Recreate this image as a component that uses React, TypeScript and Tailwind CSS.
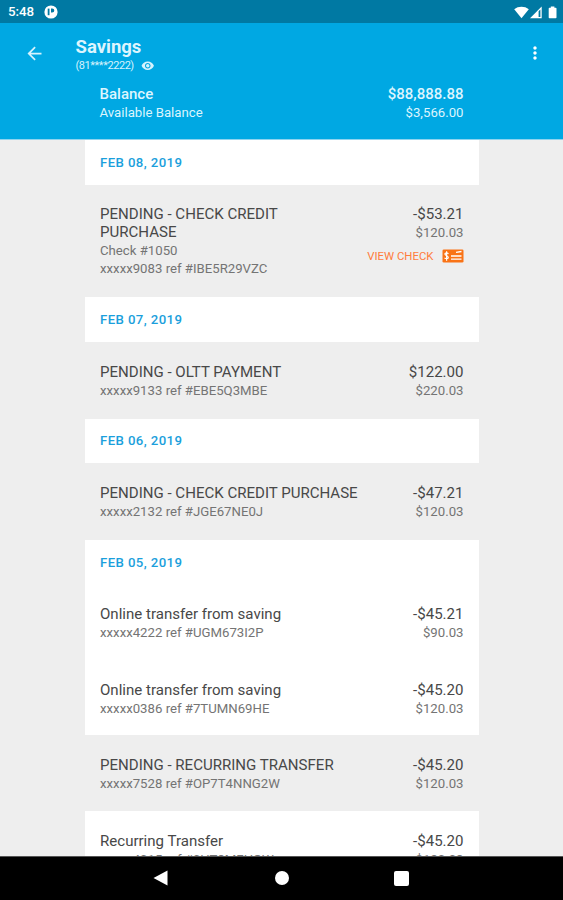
import { useState } from "react";
import { MdArrowBack, MdMoreVert, MdVisibility } from "react-icons/md";

interface Transaction {
  title: string;
  check?: string;
  reference: string;
  amount: string;
  balance: string;
  pending?: boolean;
}

interface DayGroup {
  date: string;
  transactions: Transaction[];
}

const days: DayGroup[] = [
  {
    date: "FEB 08, 2019",
    transactions: [
      {
        title: "PENDING - CHECK CREDIT PURCHASE",
        check: "Check #1050",
        reference: "xxxxx9083 ref #IBE5R29VZC",
        amount: "-$53.21",
        balance: "$120.03",
        pending: true,
      },
    ],
  },
  {
    date: "FEB 07, 2019",
    transactions: [
      {
        title: "PENDING - OLTT PAYMENT",
        reference: "xxxxx9133 ref #EBE5Q3MBE",
        amount: "$122.00",
        balance: "$220.03",
        pending: true,
      },
    ],
  },
  {
    date: "FEB 06, 2019",
    transactions: [
      {
        title: "PENDING - CHECK CREDIT PURCHASE",
        reference: "xxxxx2132 ref #JGE67NE0J",
        amount: "-$47.21",
        balance: "$120.03",
        pending: true,
      },
    ],
  },
  {
    date: "FEB 05, 2019",
    transactions: [
      {
        title: "Online transfer from saving",
        reference: "xxxxx4222 ref #UGM673I2P",
        amount: "-$45.21",
        balance: "$90.03",
      },
      {
        title: "Online transfer from saving",
        reference: "xxxxx0386 ref #7TUMN69HE",
        amount: "-$45.20",
        balance: "$120.03",
      },
      {
        title: "PENDING - RECURRING TRANSFER",
        reference: "xxxxx7528 ref #OP7T4NNG2W",
        amount: "-$45.20",
        balance: "$120.03",
        pending: true,
      },
      {
        title: "Recurring Transfer",
        reference: "xxxxx4015 ref #0HT3MFHGW",
        amount: "-$45.20",
        balance: "$120.03",
      },
    ],
  },
];

const StatusBar = () => (
  <div className="flex h-[23px] shrink-0 items-center bg-[#0079a3] pt-px pr-[6px] pl-[8px] text-white">
    <span className="text-[13.3px] font-medium">5:48</span>
    <svg className="ml-[10px] size-[14px]" viewBox="0 0 14 14">
      <circle cx="7" cy="7" r="6.6" fill="#fff" />
      <path d="M4.6 3.6v6.6" fill="none" stroke="#0079a3" strokeWidth="1.8" />
      <path d="M7 3.4h1.2a2 2 0 0 1 0 4.2H7z" fill="#0079a3" />
    </svg>
    <svg className="ml-auto h-[13px] w-[43px]" viewBox="0 0 43 13" fill="#fff">
      <path d="M.2 3.2C4.3-.1 10.7-.1 14.8 3.2L7.5 12.2z" />
      <path d="M27.7.6V12.3H16z" />
      <path d="M24.6 5.2l1.800-1.800v7.600h-1.800z" fill="#0079a3" />
      <path d="M35.500 1.700h1.300V.6h3.600v1.100h1.300q.8 0 .8.800v9q0 .8-.8.800h-6.200q-.8 0-.8-.8v-9q0-.8.8-.8z" />
    </svg>
  </div>
);

interface HeaderProps {
  masked: boolean;
  onToggle: () => void;
}

const Header = ({ masked, onToggle }: HeaderProps) => (
  <header className="h-[117px] shrink-0 border-b border-[#8fd4ef] bg-[#00a8e3] text-white">
    <div className="flex h-[61.5px] items-start">
      <button className="mt-[19.5px] ml-[24px]" aria-label="Back">
        <MdArrowBack className="size-[21px] text-[#d5f2fd]" />
      </button>
      <div className="mt-[13px] ml-[30.5px]">
        <h1 className="text-[18.5px] leading-[22px] font-bold text-[#dcf5fe]">Savings</h1>
        <div className="flex h-[16px] items-center text-[11px] text-[#d5f2fd]">
          <span className="w-[58px] tracking-[-0.45px]">{masked ? "(81****2222)" : "(8100002222)"}</span>
          <button className="ml-[7px]" onClick={onToggle} aria-label="Show account number">
            <MdVisibility className="size-[13.5px]" />
          </button>
        </div>
      </div>
      <button className="mt-[20px] mr-[18px] ml-auto" aria-label="More options">
        <MdMoreVert className="size-[20px]" />
      </button>
    </div>
    <div className="mx-[99.5px] flex justify-between text-[#dcf5fe]">
      <div>
        <p className="text-[15px] leading-[19px] font-medium">Balance</p>
        <p className="text-[13.2px] leading-[18px]">Available Balance</p>
      </div>
      <div className="text-right">
        <p className="text-[15px] leading-[19px] font-medium">$88,888.88</p>
        <p className="text-[13.2px] leading-[18px]">$3,566.00</p>
      </div>
    </div>
  </header>
);

const CheckIcon = () => (
  <svg className="h-[14px] w-[22px]" viewBox="0 0 22 14">
    <rect x=".5" y=".4" width="21" height="13.2" rx="1.3" fill="#f97316" />
    <path d="M14 3.3l5.5-.8M9 7h10.5M9 10.2h10.5" stroke="#fff" strokeWidth="1.3" />
    <path
      d="M6.5 4.7Q4.5 3.2 3.2 4.4C2 6.5 6.5 6.3 6.3 8.8Q5 10.5 2.5 9M4.6 2.3v9.4"
      fill="none"
      stroke="#fff"
      strokeWidth="1.2"
    />
  </svg>
);

const TransactionRow = ({ transaction }: { transaction: Transaction }) => (
  <div
    className={`flex justify-between px-[15px] pt-[20.8px] pb-[17.7px] ${
      transaction.pending ? "bg-[#eeeeee]" : "bg-white"
    }`}
  >
    <div className={transaction.check ? "w-[200px]" : ""}>
      <p className="text-[15.05px] leading-[18px] text-[#484848]">{transaction.title}</p>
      {transaction.check && (
        <p className="mt-[1px] text-[13.2px] leading-[18px] text-[#747474]">{transaction.check}</p>
      )}
      <p
        className={`text-[13.2px] leading-[18px] text-[#747474] ${transaction.check ? "" : "mt-[1px]"}`}
      >
        {transaction.reference}
      </p>
    </div>
    <div className="text-right">
      <p className="text-[15.05px] leading-[18px] text-[#484848]">{transaction.amount}</p>
      <p className="mt-[1px] text-[13.2px] leading-[18px] text-[#747474]">{transaction.balance}</p>
      {transaction.check && (
        <button className="mt-[7px] flex items-center gap-[8px] text-[11.4px] leading-[14px] text-[#ff7d3c]">
          VIEW CHECK
          <CheckIcon />
        </button>
      )}
    </div>
  </div>
);

const NavBar = () => (
  <nav className="flex h-[44px] shrink-0 items-center border-t border-[#555] bg-black pb-px pl-[153px]">
    <svg className="h-[16px] w-[15px]" viewBox="0 0 15 16" fill="#fff">
      <path d="M14.5.5v15L.5 8z" />
    </svg>
    <div className="ml-[106.5px] size-[14.5px] rounded-full bg-white" />
    <div className="ml-[105px] size-[15px] rounded-[2px] bg-white" />
  </nav>
);

const App = () => {
  const [masked, setMasked] = useState(true);

  return (
    <div className="flex h-[900px] w-[563px] flex-col overflow-hidden bg-[#eeeeee] font-['Roboto',sans-serif]">
      <StatusBar />
      <Header masked={masked} onToggle={() => setMasked(!masked)} />
      <main className="mr-[84.5px] ml-[85px] min-h-0 flex-1 overflow-hidden">
        {days.map((day) => (
          <section key={day.date} className="mb-[1.3px]">
            <h2 className="flex h-[44.5px] items-center bg-white px-[15px] pt-px text-[13.2px] font-medium tracking-[0.4px] text-[#1b9fdc]">
              {day.date}
            </h2>
            {day.transactions.map((transaction) => (
              <TransactionRow key={transaction.reference} transaction={transaction} />
            ))}
          </section>
        ))}
      </main>
      <NavBar />
    </div>
  );
};

export default App;
